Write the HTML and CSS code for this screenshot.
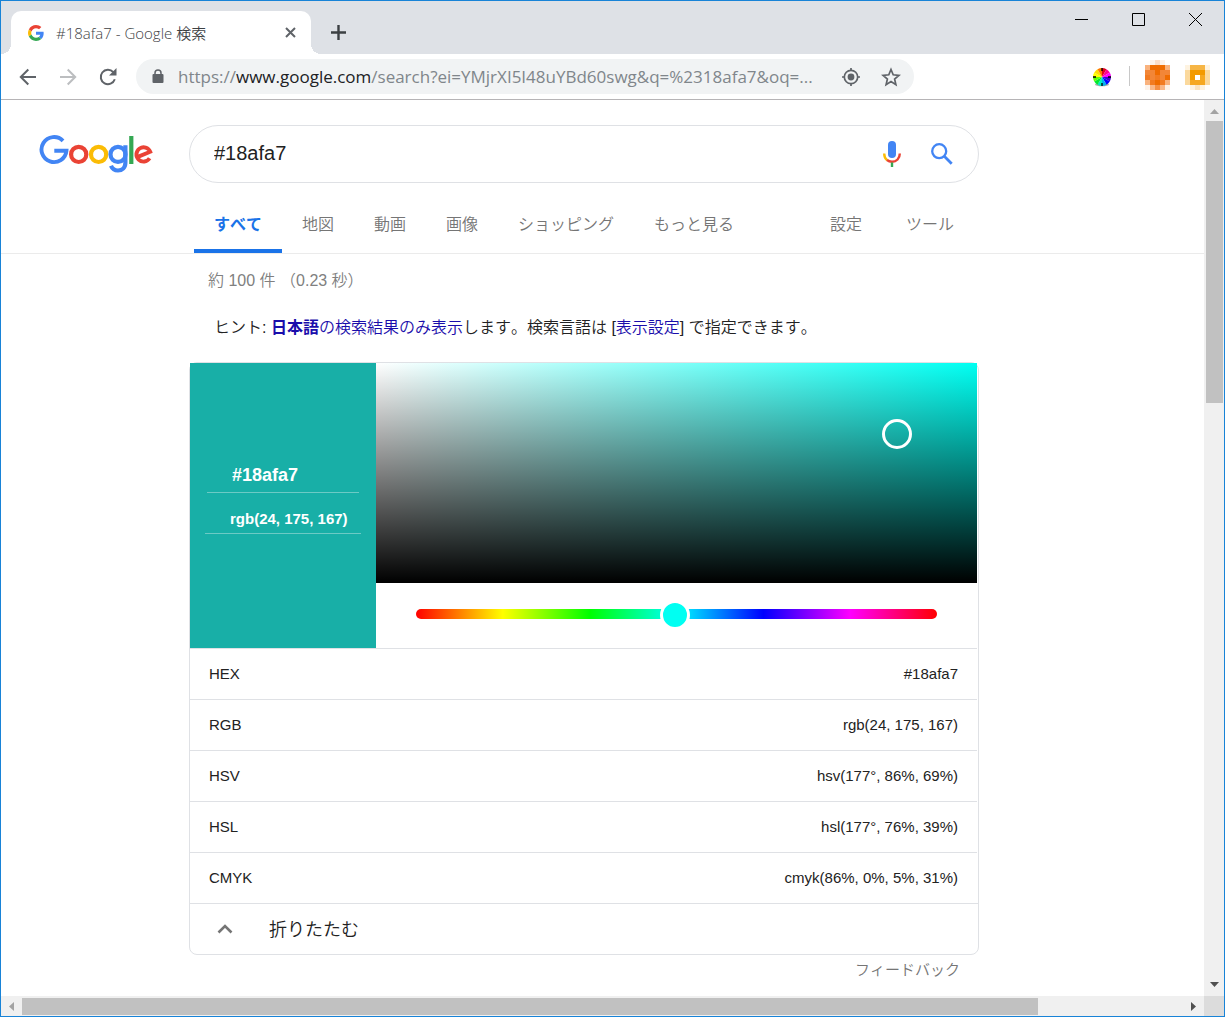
FILE: index.html
```html
<!DOCTYPE html>
<html lang="ja">
<head>
<meta charset="utf-8">
<meta name="viewport" content="width=device-width, initial-scale=1">
<title>#18afa7 - Google 検索</title>
<link rel="stylesheet" href="styles.css">
</head>
<body>
<div class="window">
  <header class="tabstrip">
    <div class="tab">
      <svg class="favicon" viewBox="0 0 48 48" aria-hidden="true">
        <path fill="#ea4335" d="M24 9.5c3.5 0 6.700 1.200 9.200 3.600l6.900-6.900C35.900 2.400 30.500 0 24 0 14.600 0 6.500 5.400 2.600 13.200l8 6.200C12.400 13.700 17.700 9.500 24 9.500z"/>
        <path fill="#4285f4" d="M47 24.500c0-1.600-.2-3.100-.4-4.500H24v9h12.900c-.6 3-2.300 5.500-4.800 7.200l7.700 6C44.400 38 47 31.800 47 24.500z"/>
        <path fill="#fbbc05" d="M10.500 28.600c-.5-1.500-.8-3-.8-4.600s.3-3.100.8-4.600l-8-6.200C1 16.500 0 20.100 0 24s.9 7.500 2.600 10.800l7.900-6.200z"/>
        <path fill="#34a853" d="M24 48c6.500 0 11.900-2.100 15.900-5.800l-7.700-6c-2.200 1.500-4.900 2.300-8.200 2.300-6.300 0-11.600-4.200-13.500-9.900l-7.900 6.200C6.500 42.600 14.600 48 24 48z"/>
      </svg>
      <span class="tab-title">#18afa7 - Google 検索</span>
      <button class="icon-button" type="button" aria-label="タブを閉じる">
        <svg width="11" height="11" viewBox="0 0 11 11"><path d="M1 1l9 9M10 1l-9 9" stroke="#5f6368" stroke-width="2" fill="none"/></svg>
      </button>
    </div>
    <button class="icon-button new-tab" type="button" aria-label="新しいタブ">
      <svg width="15" height="15" viewBox="0 0 15 15"><path d="M7.500 0v15M0 7.500h15" stroke="#3c4043" stroke-width="2.400" fill="none"/></svg>
    </button>
    <div class="window-controls">
      <button type="button" aria-label="最小化"><svg width="13" height="13" viewBox="0 0 13 13"><path d="M0 6.500h13" stroke="#000" fill="none"/></svg></button>
      <button type="button" aria-label="最大化"><svg width="13" height="13" viewBox="0 0 13 13"><path d="M.5.500h12v12H.5z" stroke="#000" fill="none"/></svg></button>
      <button type="button" aria-label="閉じる"><svg width="13" height="13" viewBox="0 0 13 13"><path d="M0 0l13 13M13 0L0 13" stroke="#000" fill="none"/></svg></button>
    </div>
  </header>

  <div class="toolbar">
    <button class="icon-button nav-button" type="button" aria-label="戻る">
      <svg width="18" height="18" viewBox="0 0 18 18"><path d="M17 9H2M9.300 1.500L1.800 9l7.500 7.500" stroke="#5f6368" stroke-width="2" fill="none"/></svg>
    </button>
    <button class="icon-button nav-button" type="button" aria-label="進む">
      <svg width="18" height="18" viewBox="0 0 18 18"><path d="M1 9h15M8.700 1.500L16.200 9l-7.500 7.500" stroke="#bcbec0" stroke-width="2" fill="none"/></svg>
    </button>
    <button class="icon-button nav-button" type="button" aria-label="再読み込み">
      <svg width="18" height="18" viewBox="0 0 18 18"><path d="M15.800 11.200A7.200 7.200 0 1 1 14.300 4.100" stroke="#5f6368" stroke-width="2" fill="none"/><path d="M17.500 0v7.500H10z" fill="#5f6368"/></svg>
    </button>
    <div class="omnibox">
      <svg class="lock" width="12" height="15" viewBox="0 0 12 15" aria-hidden="true"><rect x="0.500" y="5" width="11" height="9" rx="1" fill="#5f6368"/><path d="M3 6V4a3 3 0 0 1 6 0v2" stroke="#5f6368" stroke-width="1.500" fill="none"/></svg>
      <span class="url">https://<b>www.google.com</b>/search?ei=YMjrXI5I48uYBd60swg&amp;q=%2318afa7&amp;oq=...</span>
      <button class="icon-button" type="button" aria-label="位置情報">
        <svg width="20" height="20" viewBox="0 0 20 20"><circle cx="10" cy="10" r="6.700" stroke="#5f6368" stroke-width="1.700" fill="none"/><circle cx="10" cy="10" r="3.400" fill="#5f6368"/><path d="M10 1v2.500M10 16.500V19M1 10h2.500M16.500 10H19" stroke="#5f6368" stroke-width="1.700"/></svg>
      </button>
      <button class="icon-button" type="button" aria-label="ブックマーク">
        <svg width="20" height="20" viewBox="0 0 20 20"><path d="M10 2.500l2.200 5.300 5.700.5-4.300 3.700 1.300 5.600-4.900-3-4.900 3 1.300-5.600-4.300-3.700 5.700-.5z" stroke="#5f6368" stroke-width="1.700" fill="none"/></svg>
      </button>
    </div>
    <div class="extensions">
      <button class="icon-button wheel-button" type="button" aria-label="カラーピッカー">
        <svg width="20" height="20" viewBox="0 0 20 20">
          <ellipse cx="10" cy="17.500" rx="7" ry="1.800" fill="#aaa"/>
          <path fill="#ff0" d="M10 10L1 10A9 9 0 0 1 2.200 5.500z"/><path fill="#fd0" d="M10 10L2.200 5.500A9 9 0 0 1 5.500 2.200z"/><path fill="#ff7800" d="M10 10L5.500 2.200A9 9 0 0 1 10 1z"/>
          <path fill="#e00020" d="M10 10V1A9 9 0 0 1 14.500 2.200z"/><path fill="#ff0090" d="M10 10L14.500 2.200A9 9 0 0 1 17.800 5.500z"/><path fill="#f0f" d="M10 10L17.800 5.500A9 9 0 0 1 19 10z"/>
          <path fill="#4000d0" d="M10 10H19A9 9 0 0 1 17.800 14.500z"/><path fill="#00f" d="M10 10L17.800 14.500A9 9 0 0 1 14.500 17.800z"/><path fill="#00b0f0" d="M10 10L14.500 17.800A9 9 0 0 1 10 19z"/>
          <path fill="#00f0c0" d="M10 10V19A9 9 0 0 1 5.500 17.800z"/><path fill="#00e830" d="M10 10L5.500 17.800A9 9 0 0 1 2.200 14.500z"/><path fill="#60ff00" d="M10 10L2.200 14.500A9 9 0 0 1 1 10z"/>
          <path d="M10 1v3M10 16v3M1 10h3M16 10h3" stroke="#000" stroke-width="1.300"/>
        </svg>
      </button>
      <span class="divider"></span>
      <button class="icon-button" type="button" aria-label="プロフィール">
        <svg width="25" height="30" viewBox="0 0 5 6" shape-rendering="crispEdges">
          <path fill="#fdf2e9" d="M1 0h3v1H1zM0 5h1v1H0zM4 5h1v1H4z"/><path fill="#fbdcc6" d="M2 0h1v1H2z"/>
          <path fill="#f28637" d="M0 2h5v3H0z"/><path fill="#f9b27d" d="M0 1h1v1H0zM4 1h1v1H4zM0 4h1v1H0zM4 4h1v1H4z"/>
          <path fill="#ef6c00" d="M1 1h3v1H1zM2 2h1v1H2zM4 3h1v1H4zM2 4h1v1H2z"/><path fill="#f27b22" d="M0 3h1v1H0zM2 3h1v1H2zM1 4h1v1H1zM3 4h1v1H3z"/><path fill="#f58f45" d="M2 5h1v1H2z"/><path fill="#f9b788" d="M1 5h1v1H1zM3 5h1v1H3z"/>
        </svg>
      </button>
      <button class="icon-button" type="button" aria-label="メニュー">
        <svg width="25" height="25" viewBox="0 0 5 5" shape-rendering="crispEdges">
          <path fill="#fbd99d" d="M0 0h5v4H0z"/><path fill="#fef3e0" d="M0 0h1v1H0zM4 0h1v1H4zM0 4h5v1H0z"/>
          <path fill="#f6b545" d="M1 0h3v1H1z"/><path fill="#f39a00" d="M1 1h3v2H1z"/><path fill="#f6a821" d="M1 3h3v1H1zM3 2h1v1H3z"/><path fill="#fff" d="M2 2h1v1H2zM0 4h1v1H0zM4 4h1v1H4z"/><path fill="#fbe3bd" d="M2 4h1v1H2z"/>
        </svg>
      </button>
    </div>
  </div>

  <div class="viewport">
    <main class="page">
      <div class="search-header">
        <a class="logo" href="#" aria-label="Google">
          <svg width="114" height="38" viewBox="0 0 114 38" fill="none" stroke-width="4.200">
            <path stroke="#4285f4" d="M24 5.900A12.500 12.500 0 1 0 27.450 15.700H15.300" stroke-width="3.900"/>
            <circle stroke="#ea4335" cx="39.700" cy="19.400" r="7.600"/>
            <circle stroke="#fbbc05" cx="59.600" cy="19.400" r="7.600"/>
            <path stroke="#4285f4" d="M86.400 10.200V27.500C86.400 32.800 83 35.500 79 35.500C75.300 35.500 73 33.300 72 30.800"/>
            <circle stroke="#4285f4" cx="79" cy="19.400" r="7.500"/>
            <path stroke="#34a853" d="M92.300 1v28"/>
            <path stroke="#ea4335" d="M98.200 22.100L111.200 16.700A7.150 7.150 0 1 0 110.600 23.300" stroke-width="3.900"/>
          </svg>
        </a>
        <form class="search-box">
          <input type="text" value="#18afa7" aria-label="検索">
          <button class="icon-button" type="button" aria-label="音声検索">
            <svg width="18" height="26" viewBox="0 0 18 26" fill="none"><rect x="5" y="0" width="8" height="17" rx="4" fill="#4285f4"/><path d="M1.200 12.500C1.200 16 2.500 18 4.200 19.200" stroke="#fbbc05" stroke-width="2.400"/><path d="M4 19C5.200 20 7 20.700 9 20.700C13.500 20.700 16.800 17.500 16.800 12.500" stroke="#ea4335" stroke-width="2.400"/><path d="M9 21.500V26" stroke="#34a853" stroke-width="2.400"/></svg>
          </button>
          <button class="icon-button" type="button" aria-label="Google 検索">
            <svg width="22" height="22" viewBox="0 0 22 22" fill="none" stroke="#4285f4"><circle cx="8.200" cy="8.200" r="7" stroke-width="2.300"/><path d="M13.300 13.300L20.700 20.700" stroke-width="2.800"/></svg>
          </button>
        </form>
        <nav class="search-nav">
          <a class="active" href="#">すべて</a>
          <a href="#">地図</a>
          <a href="#">動画</a>
          <a href="#">画像</a>
          <a href="#">ショッピング</a>
          <a href="#">もっと見る</a>
          <div class="nav-tools">
            <a href="#">設定</a>
            <a href="#">ツール</a>
          </div>
        </nav>
      </div>

      <section class="results">
        <p class="stats">約 100 件 （0.23 秒）</p>
        <p class="hint">ヒント: <a href="#"><b>日本語</b>の検索結果のみ表示</a>します。検索言語は [<a href="#">表示設定</a>] で指定できます。</p>

        <div class="card">
          <div class="picker">
            <div class="swatch">
              <input class="hex-field" type="text" value="#18afa7" aria-label="HEX">
              <input class="rgb-field" type="text" value="rgb(24, 175, 167)" aria-label="RGB">
            </div>
            <div class="controls">
              <div class="shade"><span class="marker"></span></div>
              <div class="hue-row"><input class="hue" type="range" min="0" max="360" value="179" aria-label="色相"></div>
            </div>
          </div>
          <table class="values">
            <tr><th scope="row">HEX</th><td>#18afa7</td></tr>
            <tr><th scope="row">RGB</th><td>rgb(24, 175, 167)</td></tr>
            <tr><th scope="row">HSV</th><td>hsv(177°, 86%, 69%)</td></tr>
            <tr><th scope="row">HSL</th><td>hsl(177°, 76%, 39%)</td></tr>
            <tr><th scope="row">CMYK</th><td>cmyk(86%, 0%, 5%, 31%)</td></tr>
          </table>
          <button class="collapse" type="button">
            <svg width="16" height="10" viewBox="0 0 16 10"><path d="M1.500 8.500L8 2l6.500 6.500" stroke="#757575" stroke-width="2.600" fill="none"/></svg>
            <span>折りたたむ</span>
          </button>
        </div>
        <a class="feedback" href="#">フィードバック</a>
      </section>
    </main>

    <div class="scrollbar vertical">
      <svg class="arrow" width="9" height="5" viewBox="0 0 9 5"><path d="M0 5L4.500 0L9 5z" fill="#a3a3a3"/></svg>
      <div class="track"><div class="thumb"></div></div>
      <svg class="arrow" width="9" height="5" viewBox="0 0 9 5"><path d="M0 0L4.500 5L9 0z" fill="#505050"/></svg>
    </div>
    <div class="scrollbar horizontal">
      <svg class="arrow" width="5" height="9" viewBox="0 0 5 9"><path d="M5 0L0 4.500L5 9z" fill="#a3a3a3"/></svg>
      <div class="track"><div class="thumb"></div></div>
      <svg class="arrow" width="5" height="9" viewBox="0 0 5 9"><path d="M0 0L5 4.500L0 9z" fill="#505050"/></svg>
    </div>
    <div class="corner"></div>
  </div>
</div>
</body>
</html>
```
FILE: styles.css
```css
* { box-sizing: border-box; }

body {
  margin: 0;
  background: #fff;
  color: #222;
  font-family: "Liberation Sans", "Noto Sans CJK JP", sans-serif;
  font-size: 16px;
  font-kerning: none;
}

a { color: inherit; text-decoration: none; }
p { margin: 0; }
svg { display: block; flex: none; }

button,
input {
  margin: 0;
  padding: 0;
  border: 0;
  background: none;
  color: inherit;
  font: inherit;
}

.icon-button {
  display: flex;
  flex: none;
  align-items: center;
  justify-content: center;
}

.window {
  display: flex;
  flex-direction: column;
  min-height: 100vh;
  border: 1px solid #1883d7;
}

/* Tab strip */
.tabstrip {
  display: flex;
  align-items: flex-start;
  height: 53px;
  padding-left: 10px;
  background: #dee1e6;
}

.tab {
  position: relative;
  display: flex;
  align-items: center;
  width: 300px;
  height: 43px;
  margin-top: 10px;
  padding: 0 15px 0 17px;
  border-radius: 10px 10px 0 0;
  background: #fff;
}

.tab::before,
.tab::after {
  content: "";
  position: absolute;
  bottom: 0;
  width: 10px;
  height: 10px;
}

.tab::before { right: 100%; background: radial-gradient(circle at 0 0, transparent 10px, #fff 10px); }
.tab::after { left: 100%; background: radial-gradient(circle at 100% 0, transparent 10px, #fff 10px); }

.favicon { width: 16px; height: 16px; }

.tab-title {
  flex: 1;
  margin-left: 12px;
  color: #3c4043;
  font-family: "Open Sans", "Noto Sans CJK JP", sans-serif;
  font-size: 15px;
  font-weight: 350;
  line-height: 20px;
}

.new-tab { margin: 24px 0 0 20px; }

.window-controls { display: flex; margin-left: auto; }

.window-controls button {
  display: flex;
  align-items: center;
  justify-content: center;
  width: 57px;
  height: 37px;
}

/* Toolbar */
.toolbar {
  display: flex;
  align-items: center;
  height: 46px;
  padding: 0 14px 0 7px;
  border-bottom: 1px solid #b6b4b6;
}

.nav-button { width: 40px; height: 40px; }

.omnibox {
  display: flex;
  flex: 1;
  align-items: center;
  gap: 20px;
  min-width: 0;
  height: 35px;
  margin-left: 8px;
  padding: 0 13px 0 16px;
  border-radius: 18px;
  background: #f1f3f4;
}

.lock { margin-right: -6px; }

.url {
  flex: 1;
  min-width: 0;
  overflow: hidden;
  color: #80868b;
  font-family: "Open Sans", sans-serif;
  font-size: 17px;
  line-height: 24px;
  white-space: nowrap;
}

.url b { color: #202124; font-weight: 400; }

.extensions {
  display: flex;
  align-items: flex-end;
  gap: 15px;
  padding: 0 0 3px 178px;
}

.wheel-button { height: 27px; }
.divider { width: 1px; height: 20px; margin: 0 0 4px 2px; background: #c8c8c8; }

/* Page viewport with its scroll bars */
.viewport {
  display: grid;
  flex: 1;
  grid-template-rows: 1fr 20px;
  grid-template-columns: minmax(0, 1fr) 20px;
}

.search-header {
  display: grid;
  grid-template-columns: 188px minmax(0, 790px);
  padding-top: 25px;
  border-bottom: 1px solid #ebebeb;
}

.logo { padding: 10px 0 0 38px; }

.search-box {
  display: flex;
  align-items: center;
  gap: 30px;
  height: 58px;
  padding: 0 25px 0 24px;
  border: 1px solid #dfe1e5;
  border-radius: 29px;
}

.search-box input {
  flex: 1;
  min-width: 0;
  height: 26px;
  margin-bottom: 2px;
  color: #222;
  font-size: 20px;
}

.search-nav {
  display: flex;
  grid-column: 2;
  padding-left: 5px;
  color: #757575;
  font-weight: 350;
  white-space: nowrap;
}

.search-nav a {
  height: 70px;
  padding: 30px 20px 0;
  line-height: 24px;
}

.search-nav .active {
  border-bottom: 4px solid #1a73e8;
  color: #1a73e8;
  font-weight: 700;
}

.nav-tools {
  display: flex;
  gap: 4px;
  margin: 0 5px 0 auto;
}

/* Results */
.results {
  display: flex;
  flex-direction: column;
  max-width: 978px;
  padding-left: 188px;
}

.stats {
  padding: 15px 19px 0;
  color: #808080;
  font-weight: 350;
  line-height: 24px;
}

.hint {
  padding: 23px 25px 22px;
  font-weight: 350;
  line-height: 24px;
}

.hint a { color: #1a0dab; }
.hint b { font-weight: 700; }

.card {
  border: 1px solid #dfe1e5;
  border-radius: 8px;
}

.picker {
  display: flex;
  height: 285px;
  padding-right: 1px;
}

.swatch {
  display: flex;
  flex: none;
  flex-direction: column;
  align-items: center;
  width: 186px;
  padding-top: 98px;
  background: #18afa7;
  color: #fff;
  font-weight: 700;
}

.swatch input {
  padding-left: 25px;
  border-bottom: 1px solid #6ccac5;
}

.hex-field { width: 152px; height: 32px; padding-bottom: 2px; font-size: 18px; }
.rgb-field { width: 156px; height: 30px; margin-top: 11px; font-size: 15px; }

.controls { flex: 1; min-width: 0; }

.shade {
  position: relative;
  height: 220px;
  background:
    linear-gradient(to bottom, transparent, #000),
    linear-gradient(to right, #fff, #00fff2);
}

.marker {
  position: absolute;
  top: 56px;
  right: 65px;
  width: 30px;
  height: 30px;
  border: 3px solid #fff;
  border-radius: 50%;
}

.hue-row { display: flex; padding: 16px 40px; }

.hue {
  flex: 1;
  min-width: 0;
  height: 30px;
  appearance: none;
}

.hue::-webkit-slider-runnable-track {
  height: 10px;
  border-radius: 5px;
  background: linear-gradient(to right, #f00, #ff0, #0f0, #0ff, #00f, #f0f, #f00);
}

.hue::-webkit-slider-thumb {
  width: 30px;
  height: 30px;
  margin-top: -9px;
  border: 3px solid #fff;
  border-radius: 50%;
  background: #00fff2;
  appearance: none;
}

.values {
  width: 100%;
  padding-right: 1px;
  border-spacing: 0;
  font-size: 15px;
}

.values th,
.values td {
  height: 51px;
  padding: 0 19px 2px;
  border-top: 1px solid #dfe1e5;
  font-weight: 400;
  text-align: left;
}

.values td { text-align: right; }

.collapse {
  display: flex;
  align-items: center;
  gap: 36px;
  width: 100%;
  height: 51px;
  padding: 0 27px;
  border-top: 1px solid #dfe1e5;
  font-size: 18px;
  font-weight: 350;
}

.collapse span { padding-bottom: 3px; }

.feedback {
  align-self: flex-end;
  padding: 3px 19px;
  color: #757575;
  font-size: 15px;
  font-weight: 350;
  line-height: 24px;
}

/* Scroll bars */
.scrollbar {
  display: flex;
  align-items: center;
  background: #f0f0f0;
}

.vertical { flex-direction: column; padding: 9px 0; }
.horizontal { padding: 0 8px; }
.track { display: flex; flex: 1; }
.thumb { background: #c1c1c1; }
.vertical .track { width: 17px; margin: 7px 0; }
.vertical .thumb { width: 100%; height: 33%; }
.horizontal .track { height: 17px; margin: 0 8px; }
.horizontal .thumb { width: 87.5%; }
.corner { background: #dcdcdc; }
```
